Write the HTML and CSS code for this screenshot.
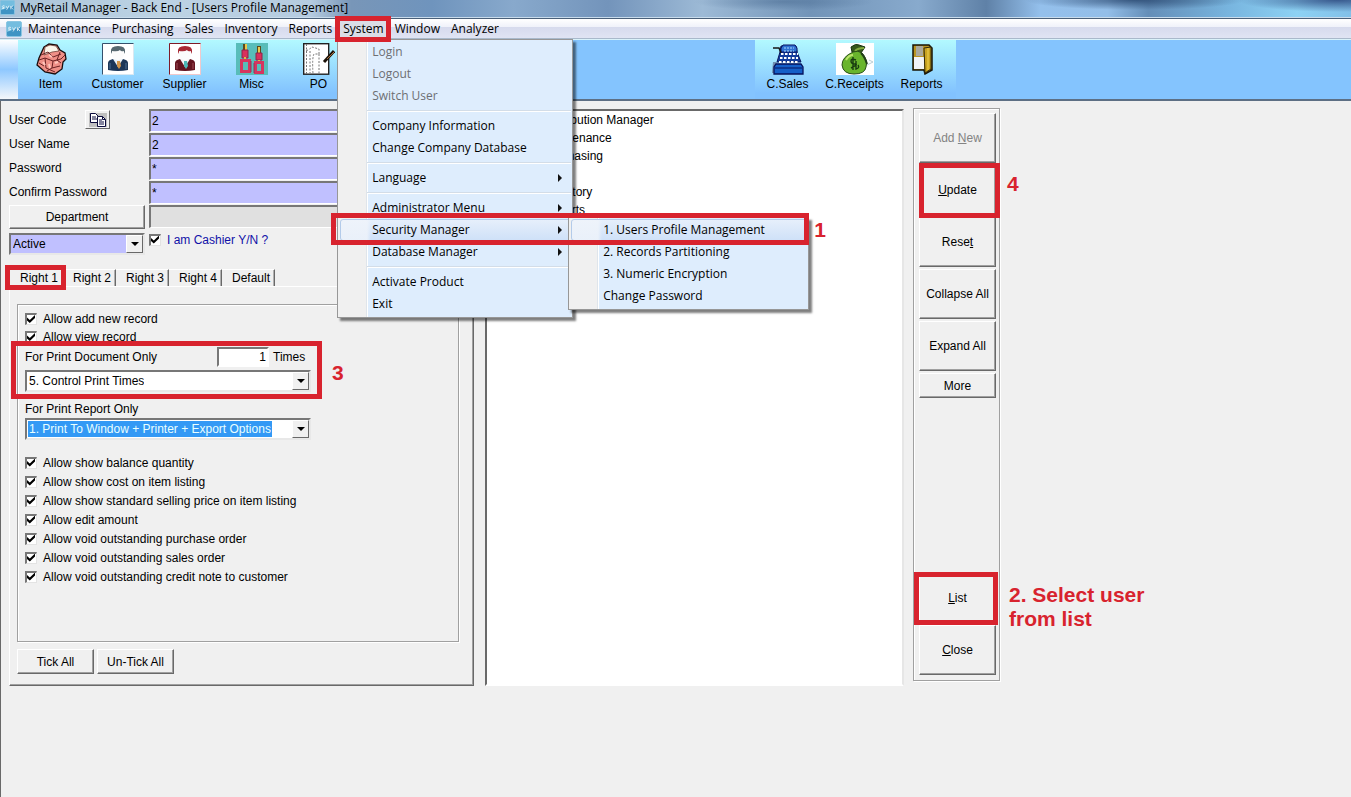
FILE: index.html
```html
<!DOCTYPE html>
<html lang="en">
<head>
<meta charset="utf-8">
<title>MyRetail Manager - Back End</title>
<link rel="stylesheet" href="styles.css">
</head>
<body>
<svg class="defs" aria-hidden="true">
  <symbol id="logo" viewBox="0 0 16 16">
    <rect x="0.5" y="0.5" width="15" height="15" rx="1.5" fill="#3f94c4" stroke="#8cc6e2"/>
    <path d="M1 1h14v5L1 11z" fill="#74bddf"/>
    <path d="M5 6.500q-2.500-1-2.500 0.500t2 1q1 1.500-2.500 1M6.500 6.500l1.500 2.500 1.500-3M7 10.500L8 9M11.500 10V6.500M11.500 8l2.500-2M12 8l2 2" fill="none" stroke="#fff" stroke-width="0.700"/>
  </symbol>
</svg>

<header class="titlebar">
  <svg class="titlebar__icon"><use href="#logo"/></svg>
  <span>MyRetail Manager - Back End - [Users Profile Management]</span>
</header>

<nav class="menubar">
  <svg class="menubar__icon"><use href="#logo"/></svg>
  <button class="menubar__item">Maintenance</button>
  <button class="menubar__item">Purchasing</button>
  <button class="menubar__item">Sales</button>
  <button class="menubar__item">Inventory</button>
  <button class="menubar__item">Reports</button>
  <div class="menubar__open">
    <button class="menubar__item">System</button>
    <span class="mark mark--system"></span>
    <ul class="menu">
      <li><button class="menu__item" disabled>Login</button></li>
      <li><button class="menu__item" disabled>Logout</button></li>
      <li><button class="menu__item" disabled>Switch User</button></li>
      <li class="menu__sep"></li>
      <li><button class="menu__item">Company Information</button></li>
      <li><button class="menu__item">Change Company Database</button></li>
      <li class="menu__sep"></li>
      <li><button class="menu__item menu__item--more">Language</button></li>
      <li class="menu__sep"></li>
      <li><button class="menu__item menu__item--more">Administrator Menu</button></li>
      <li class="menu__parent">
        <button class="menu__item menu__item--more menu__item--active">Security Manager</button>
        <ul class="menu menu--sub">
          <li><button class="menu__item menu__item--active">1. Users Profile Management</button></li>
          <li><button class="menu__item">2. Records Partitioning</button></li>
          <li><button class="menu__item">3. Numeric Encryption</button></li>
          <li><button class="menu__item">Change Password</button></li>
        </ul>
        <span class="mark mark--security"></span>
        <span class="note note--one">1</span>
      </li>
      <li><button class="menu__item menu__item--more">Database Manager</button></li>
      <li class="menu__sep"></li>
      <li><button class="menu__item">Activate Product</button></li>
      <li><button class="menu__item">Exit</button></li>
    </ul>
  </div>
  <button class="menubar__item">Window</button>
  <button class="menubar__item">Analyzer</button>
</nav>

<div class="toolbar">
  <span class="toolbar__grip"></span>
  <div class="toolbar__group">
    <button class="tool">
      <svg class="tool__icon" viewBox="0 0 32 32">
        <path d="M9 4l5-3 8 1 3 5 5 3 1 6-3 3-1 7-7 5-10-2-8-7 2-7z" fill="#ef8f86" stroke="#180d0d" stroke-width="1.300"/>
        <path d="M10 4l5-2 6 1 3 5-7 1-8 3z" fill="#fdf6ea" stroke="#5a3028" stroke-width="0.700"/>
        <path d="M4 17l6-2 8 3 8-2 4-4M6 12l7-3 5 5 8-3M10 15l1 10 9 4M18 18l-1 7 8-2M4 20l5 3M12 28l5-3M25 9l-3 8 4 3" fill="none" stroke="#6b2223"/>
        <path d="M8 19l2 3M14 12l3 2M20 20l3-1M14 21l1 4" stroke="#ffc5bb" stroke-width="2"/>
      </svg>
      <span>Item</span>
    </button>
    <button class="tool">
      <svg class="tool__icon" viewBox="0 0 32 32">
        <rect x="0.500" y="0.500" width="31" height="31" fill="#fff" stroke="#d9e8f2"/>
        <path d="M0.500 31.500V0.500h31" fill="none" stroke="#34506c"/>
        <path d="M6 27v-7q0-3 5-4h10q5 1 5 4v7q-10 2-20 0z" fill="#1b3658"/>
        <path d="M11 16l5 8 5-8z" fill="#e9f2f8"/><path d="M15 18h3l1 5-2 3-2-3z" fill="#d2954a"/>
        <path d="M9 9q-1-6 7-6t7 6l-1 2H10z" fill="#566870"/>
        <path d="M10 8q6 1 8-1 1 2 4 1v4q-1 5-6 5t-6-5z" fill="#fbfbfb"/>
        <path d="M8 20v6M24 20v6" stroke="#4f7094"/>
      </svg>
      <span>Customer</span>
    </button>
    <button class="tool">
      <svg class="tool__icon" viewBox="0 0 32 32">
        <rect x="0.500" y="0.500" width="31" height="31" fill="#fff" stroke="#f0c8cb"/>
        <path d="M0.500 31.500V0.500h31" fill="none" stroke="#7e1b28"/>
        <path d="M6 27v-7q0-3 5-4h10q5 1 5 4v7q-10 2-20 0z" fill="#641420"/>
        <path d="M11 16l5 8 5-8z" fill="#f4f6f8"/><path d="M15 18h3l1 5-2 3-2-3z" fill="#4cb8b8"/>
        <path d="M9 9q-1-6 7-6t7 6l-1 2H10z" fill="#a92a35"/>
        <path d="M10 8q6 1 8-1 1 2 4 1v4q-1 5-6 5t-6-5z" fill="#fbfbfb"/>
        <path d="M8 20v6M24 20v6" stroke="#a04b55"/>
      </svg>
      <span>Supplier</span>
    </button>
    <button class="tool">
      <svg class="tool__icon" viewBox="0 0 32 32">
        <rect width="32" height="32" fill="#58bdb9"/>
        <path d="M9 1v8M23 3v9" stroke="#5d4a1c" stroke-width="4"/><path d="M10 1v6M23 4v6" stroke="#ecc84b" stroke-width="2"/>
        <path d="M6 7h6v8H6zM20 10h6v7h-6z" fill="#d92f5c" stroke="#8d2548"/>
        <path d="M9 14v4M23 17v3" stroke="#e7b93d" stroke-width="2"/>
        <rect x="5.500" y="17.500" width="8" height="11" fill="#58bdb9" stroke="#d6355f" stroke-width="3"/>
        <rect x="19.500" y="19.500" width="7" height="10" fill="#58bdb9" stroke="#d6355f" stroke-width="3"/>
        <path d="M15 18v11M18 20v10" stroke="#8c385b"/>
      </svg>
      <span>Misc</span>
    </button>
    <button class="tool">
      <svg class="tool__icon" viewBox="0 0 32 32">
        <rect x="0.700" y="0.700" width="25" height="30.500" fill="#fff" stroke="#222" stroke-width="1.400"/>
        <path d="M3.500 1v30M3 8q4-2 6-4l7 2v5h-5q-2 3-1 20M16 11v20M7 8v22" fill="none" stroke="#777" stroke-dasharray="2 1.500"/>
        <path d="M31 8L21 19" stroke="#1c1208" stroke-width="3"/><path d="M31 9L24 16" stroke="#a9703d"/>
      </svg>
      <span>PO</span>
    </button>
  </div>
  <div class="toolbar__group toolbar__group--end">
    <button class="tool">
      <svg class="tool__icon" viewBox="0 0 32 32">
        <path d="M1 19h4l-2 11h-3z" fill="#6e8fb2"/>
        <path d="M9 3h15l1 6 4 10H5L8 9z" fill="#133c9c" stroke="#09145c"/>
        <path d="M9 5l2-3h12l2 3v4H9z" fill="#2f72d2" stroke="#071060"/>
        <path d="M1 5h6l2 5" fill="none" stroke="#161616" stroke-width="1.500"/>
        <path d="M4 21h25l2 3v7H2v-7z" fill="#155fc8" stroke="#07125c" stroke-width="1.300"/>
        <path d="M3 25h27" stroke="#071560"/>
        <path d="M9 11h17M8 15h18M7 19h20" stroke="#fff" stroke-width="2" stroke-dasharray="2.500 1.500"/>
        <path d="M12 5h10M12 8h10" stroke="#a8d6ff" stroke-dasharray="2 1"/>
      </svg>
      <span>C.Sales</span>
    </button>
    <button class="tool">
      <svg class="tool__icon tool__icon--wide" viewBox="0 0 38 32">
        <rect width="38" height="32" fill="#fff"/>
        <path d="M16 9L15 4q5-4 8-2l6 2-4 6z" fill="#35591d" stroke="#183411"/>
        <path d="M19 8q3-3 9-3" fill="none" stroke="#83ad40" stroke-width="2"/>
        <path d="M17 9q5-2 9 1 6 7 4 14-1 7-12 7T6 22q0-8 11-13z" fill="#69b52d" stroke="#284e16"/>
        <path d="M10 17q3-5 7-5" fill="none" stroke="#bbe36d" stroke-width="2"/>
        <path d="M20 17q-5-2-5 1t4 3-4 4M17 14v13M20 18v8q4-1 2-4" fill="none" stroke="#183b10" stroke-width="1.400"/>
        <path d="M31 22l6-3M33 17l4 2" fill="none" stroke="#bccfd6"/>
        <path d="M25 10q4 4 6 11" fill="none" stroke="#203f19" stroke-width="2"/>
      </svg>
      <span>C.Receipts</span>
    </button>
    <button class="tool">
      <svg class="tool__icon" viewBox="0 0 32 32">
        <path d="M7 2h16l3 3v22l-7 4-1-4H7z" fill="#b99521" stroke="#171407" stroke-width="1.500"/>
        <path d="M10 3h7v10h-7z" fill="#aaa89b"/><path d="M8 14h10v12H8z" fill="#f2f4f8"/>
        <path d="M18 5l7-1v22l-6 4z" fill="#c9a321" stroke="#30290d"/>
        <path d="M22 5v22" stroke="#f0d251"/>
      </svg>
      <span>Reports</span>
    </button>
  </div>
</div>

<main class="workspace">
  <section class="profile">
    <form class="fields">
      <div class="fields__label"><label for="code">User Code</label>
        <button type="button" class="copy" aria-label="Copy">
          <svg viewBox="0 0 18 14" width="18" height="14">
            <rect width="18" height="14" fill="#c0c0c0"/>
            <path d="M1.500 0.500h5l3 3v6h-8z" fill="#fff" stroke="#0b0b3c"/>
            <path d="M3 4h4M3 6h5" stroke="#0b0b3c"/>
            <path d="M8.500 3.500h5l3 3v7h-8z" fill="#fff" stroke="#0b0b3c"/>
            <path d="M13.500 3.500v3h3M10 7h3M10 9h5M10 11h5" fill="none" stroke="#0b0b3c"/>
          </svg>
        </button>
      </div>
      <input id="code" class="box" type="text" value="2">
      <div class="fields__label"><label for="name">User Name</label></div>
      <input id="name" class="box" type="text" value="2">
      <div class="fields__label"><label for="pw">Password</label></div>
      <input id="pw" class="box" type="text" value="*">
      <div class="fields__label"><label for="pw2">Confirm Password</label></div>
      <input id="pw2" class="box" type="text" value="*">
      <button type="button" class="btn btn--dept">Department</button>
      <input class="box box--off" type="text" aria-label="Department" readonly>
      <div class="combo combo--status">
        <select class="combo__select" aria-label="Status"><option>Active</option></select>
        <span class="combo__arrow"></span>
      </div>
      <label class="check check--cashier"><input type="checkbox" checked>I am Cashier Y/N ?</label>
    </form>

    <div class="tabs" role="tablist">
      <button class="tab tab--active" role="tab">Right 1<span class="mark mark--tab"></span></button>
      <button class="tab" role="tab">Right 2</button>
      <button class="tab" role="tab">Right 3</button>
      <button class="tab" role="tab">Right 4</button>
      <button class="tab" role="tab">Default</button>
    </div>
    <div class="page">
      <div class="rights">
        <label class="check"><input type="checkbox" checked>Allow add new record</label>
        <label class="check"><input type="checkbox" checked>Allow view record</label>
        <div class="print">
          <div class="print__row">
            <label for="doc">For Print Document Only</label>
            <input id="times" class="times" type="text" value="1">
            <label for="times">Times</label>
          </div>
          <div class="combo">
            <select id="doc" class="combo__select"><option>5. Control Print Times</option></select>
            <span class="combo__arrow"></span>
          </div>
          <span class="mark mark--print"></span>
          <span class="note note--three">3</span>
        </div>
        <div class="print print--report">
          <label for="report">For Print Report Only</label>
          <div class="combo">
            <select id="report" class="combo__select combo__select--chosen"><option>1. Print To Window + Printer + Export Options</option></select>
            <span class="combo__arrow"></span>
          </div>
        </div>
        <div class="allow">
          <label class="check"><input type="checkbox" checked>Allow show balance quantity</label>
          <label class="check"><input type="checkbox" checked>Allow show cost on item listing</label>
          <label class="check"><input type="checkbox" checked>Allow show standard selling price on item listing</label>
          <label class="check"><input type="checkbox" checked>Allow edit amount</label>
          <label class="check"><input type="checkbox" checked>Allow void outstanding purchase order</label>
          <label class="check"><input type="checkbox" checked>Allow void outstanding sales order</label>
          <label class="check"><input type="checkbox" checked>Allow void outstanding credit note to customer</label>
        </div>
      </div>
      <div class="page__actions">
        <button class="btn btn--tick">Tick All</button>
        <button class="btn btn--tick">Un-Tick All</button>
      </div>
    </div>
  </section>

  <ul class="tree">
    <li>Distribution Manager</li>
    <li>Maintenance</li>
    <li>Purchasing</li>
    <li>Sales</li>
    <li>Inventory</li>
    <li>Reports</li>
  </ul>

  <aside class="actions">
    <button class="btn btn--tall" disabled>Add <u>N</u>ew</button>
    <div class="marked">
      <button class="btn btn--tall"><u>U</u>pdate</button>
      <span class="mark mark--update"></span>
      <span class="note note--four">4</span>
    </div>
    <button class="btn btn--tall">Rese<u>t</u></button>
    <button class="btn btn--tall">Collapse All</button>
    <button class="btn btn--tall">Expand All</button>
    <button class="btn">More</button>
    <div class="marked marked--last">
      <button class="btn btn--tall"><u>L</u>ist</button>
      <span class="mark mark--list"></span>
      <span class="note note--two">2. Select user<br>from list</span>
    </div>
    <button class="btn btn--tall"><u>C</u>lose</button>
  </aside>
</main>
</body>
</html>
```
FILE: styles.css
```css
:root {
  --face: #f0f0f0;
  --dark: #696969;
  --mid: #a0a0a0;
  --field: #c0c0ff;
  --red: #d8232e;
  --ui: "Open Sans", "Noto Sans", sans-serif;
}

* { box-sizing: border-box; }

body {
  margin: 0;
  min-height: 100vh;
  display: flex;
  flex-direction: column;
  background: var(--face);
  color: #000;
  font: 12px/18px "Liberation Sans", Arial, sans-serif;
}

button, input, select { font: inherit; color: inherit; margin: 0; }
ul { list-style: none; margin: 0; padding: 0; }
.defs { display: none; }

/* Title bar */
.titlebar {
  height: 19px;
  display: flex;
  align-items: center;
  gap: 5px;
  padding-bottom: 3px;
  border-bottom: 1px solid #4a6079;
  box-shadow: inset 0 -1px #c9dcec;
  font: 12px/15px var(--ui);
  white-space: nowrap;
  background:
    radial-gradient(ellipse 110px 10px at 84% 0, rgba(39, 69, 109, 0.8) 0, transparent 100%),
    radial-gradient(ellipse 100px 12px at 99% 0, #38598d 0, transparent 100%),
    radial-gradient(ellipse 90px 9px at 58% 10%, rgba(67, 101, 140, 0.5) 0, transparent 100%),
    linear-gradient(90deg, #a9c3d9 0, #bdd3e4 12%, #b5cbe0 23%, #7896b8 26%, #6f94bd 32%, #88a9cc 38%, #7394bb 45%, #9dbad6 52%, #7294b8 60%, #88aacd 68%, #5f81a7 73%, #94c0ec 77%, #93bee8 82%, #648eb8 85%, #78b5df 91%, #8dd2f4 96%, #82c0e8 100%);
}
.titlebar__icon { width: 15px; height: 15px; flex: none; }

/* Menu bar and drop-down menus */
.menubar {
  position: relative;
  z-index: 5;
  height: 20px;
  display: flex;
  align-items: center;
  padding-left: 6px;
  border-bottom: 1px solid #a9b9cb;
  font: 12px/18px var(--ui);
  background: linear-gradient(#fff 0, #f0f2fa 40%, #d6daed 42%, #e0e4f3 100%);
}
.menubar__icon { width: 16px; height: 16px; flex: none; }
.menubar__item { border: 0; background: none; padding: 0 5px 0 6px; }
.menubar__open { position: relative; }
.menubar__open > .menubar__item { background: #dadde6; }

.menu {
  position: absolute;
  top: 19px;
  left: 0;
  width: 236px;
  padding: 1px 1px 2px 2px;
  border: 1px solid #979797;
  background: linear-gradient(90deg, #f0f0f0 0 28px, #dfe5eb 28px 29px, #fff 29px 30px, #deedfd 30px);
  box-shadow: 3px 3px 2px rgba(0, 0, 0, 0.5);
}
.menu__item {
  display: block;
  width: 100%;
  height: 22px;
  padding: 0 0 0 31px;
  border: 1px solid transparent;
  border-radius: 3px;
  background: none;
  text-align: left;
  white-space: nowrap;
}
.menu__item:disabled { color: #6d6f73; }
.menu__item--active {
  border-color: #b3cbea;
  background: linear-gradient(90deg, rgba(240, 244, 250, 0.8) 26px, transparent 30px), linear-gradient(#e6effb, #cfe1f8);
}
.menu__item--more { position: relative; }
.menu__item--more::after {
  content: "";
  position: absolute;
  top: 6px;
  right: 8px;
  border: 4px solid transparent;
  border-left-color: #111;
  border-right-width: 0;
}
.menu__sep {
  height: 8px;
  margin-left: 27px;
  background: linear-gradient(transparent 3px, #d3dde8 3px 4px, #fff 4px 5px, transparent 5px);
}
.menu__parent { position: relative; }
.menu--sub { top: -2px; left: 228px; width: 241px; }

/* Red annotations */
.mark {
  position: absolute;
  z-index: 3;
  border: 5px solid var(--red);
  pointer-events: none;
}
.mark--system { inset: -4px -2px; }
.mark--security { inset: -6px -238px -4px -9px; }
.mark--tab { inset: -5px -4px -4px -4px; }
.mark--print { inset: -6px -11px -7px -14px; }
.mark--update { inset: -2px -4px -3px 0; }
.mark--list { inset: -1px -2px -2px -5px; }
.note {
  position: absolute;
  z-index: 3;
  color: var(--red);
  font: bold 21px/24px "Liberation Sans", Arial, sans-serif;
  white-space: nowrap;
}
.note--one { left: 474px; top: -1px; }
.note--two { left: 90px; top: 10px; }
.note--three { left: 307px; top: 14px; }
.note--four { left: 88px; top: 7px; }

/* Toolbar */
.toolbar {
  display: flex;
  height: 62px;
  border-top: 1px solid #d9f2fa;
  border-bottom: 2px solid #5d6f84;
  background: #84c4fe;
}
.toolbar__grip { width: 18px; background: linear-gradient(#fdfeff, #8ec8ff 50%, #f4f7fb); }
.toolbar__group { display: flex; background: linear-gradient(#b2f9ff, #82c2fe 90%); }
.toolbar__group--end { margin-left: 402px; }
.tool {
  width: 67px;
  padding: 3px 2px 0 0;
  border: 0;
  background: none;
  display: flex;
  flex-direction: column;
  align-items: center;
  line-height: 19px;
}
.tool__icon { width: 32px; height: 32px; flex: none; }
.tool__icon--wide { width: 38px; }

/* Work area */
.workspace {
  flex: 1;
  display: grid;
  grid-template-columns: 465fr 421fr 87px 342fr;
  align-content: start;
  column-gap: 9px;
  padding: 8px 0 0 8px;
  border-left: 1px solid var(--dark);
}

.fields {
  display: grid;
  grid-template-columns: 136px 1fr;
  grid-auto-rows: 24px;
  column-gap: 4px;
}
.fields__label { display: flex; align-items: center; gap: 19px; padding-bottom: 3px; }
.copy {
  display: flex;
  align-items: center;
  justify-content: center;
  width: 25px;
  height: 19px;
  padding: 0;
  border: 1px solid;
  border-color: #fff var(--dark) var(--dark) #fff;
  background: var(--face);
}
.box {
  width: 100%;
  height: 23px;
  padding: 0 1px 1px;
  border: 2px solid;
  border-color: #777 #fff #fff #777;
  border-bottom-width: 1px;
  background: var(--field);
}
.box--off { background: #e0e0e0; }

.btn {
  height: 25px;
  padding: 0;
  border: 1px solid;
  border-color: #fff var(--dark) var(--dark) #fff;
  box-shadow: inset -1px -1px var(--mid);
  background: var(--face);
}
.btn:disabled { color: #838383; }
.btn--dept { height: 24px; }

.combo {
  display: flex;
  align-items: center;
  height: 22px;
  padding-left: 1px;
  border: 2px solid;
  border-color: #777 #e8e8e8 #e8e8e8 #777;
  background: #fff;
}
.combo--status { background: var(--field); margin-top: 4px; }
.combo__select {
  appearance: none;
  field-sizing: content;
  height: 16px;
  line-height: 16px;
  padding: 0 1px;
  border: 0;
  background: none;
}
.combo__select--chosen { background: #3399f5; color: #e8ffff; }
.combo__arrow {
  width: 17px;
  align-self: stretch;
  margin-left: auto;
  display: grid;
  place-items: center;
  border: 1px solid;
  border-color: #fff var(--dark) var(--dark) #fff;
  background: var(--face);
  pointer-events: none;
}
.combo__arrow::after {
  content: "";
  border: 4px solid transparent;
  border-top-color: #000;
  border-bottom-width: 0;
}

.check { display: flex; align-items: center; gap: 6px; height: 19px; }
.check input {
  appearance: none;
  width: 12px;
  height: 12px;
  border: 2px solid;
  border-color: #777 #e3e3e3 #e3e3e3 #777;
  border-right-width: 1px;
  border-bottom-width: 1px;
  background: #fff;
}
.check input:checked::after {
  content: "";
  display: block;
  width: 8px;
  height: 8px;
  background: #000;
  clip-path: polygon(0 30%, 35% 62%, 100% 0, 100% 38%, 35% 100%, 0 68%);
}
.check--cashier { color: #1111a8; margin-top: 1px; }

/* Tabs */
.tabs { display: flex; padding-top: 16px; }
.tab {
  position: relative;
  width: 53px;
  height: 17px;
  padding: 0 0 0 6px;
  border: 0;
  border-right: 1px solid var(--dark);
  border-top: 1px solid #fff;
  box-shadow: inset -1px 0 #b0b0b0;
  background: var(--face);
  line-height: 16px;
}
.tab--active { width: 54px; padding-left: 7px; }

.page {
  padding: 17px 14px 11px 7px;
  border: 1px solid;
  border-color: #fff var(--dark) var(--dark) #fff;
  box-shadow: inset -1px -1px var(--mid);
}
.rights {
  padding: 5px 7px 55px;
  border: 1px solid var(--mid);
  box-shadow: 1px 1px #fff, inset 1px 1px #fff;
}
.rights > .check { height: 18px; }
.print { position: relative; width: 286px; margin-top: 1px; }
.print__row { display: flex; align-items: center; height: 23px; padding-bottom: 3px; }
.times {
  width: 52px;
  height: 20px;
  margin: 0 4px 0 auto;
  padding: 0 1px;
  border: 2px solid;
  border-color: #777 #fff #fff #777;
  background: #fff;
  text-align: right;
}
.print__row > label:last-child { width: 38px; }
.print--report { margin-top: 8px; }
.print--report > label { display: block; }
.allow { padding-top: 13px; }
.page__actions { display: flex; gap: 3px; padding-top: 7px; }
.btn--tick { width: 77px; }

.tree {
  margin-left: 2px;
  padding: 0 0 0 56px;
  border: 2px solid;
  border-color: var(--dark) #fff #fff var(--dark);
  border-right-color: #e6e6e6;
  background: #fff;
  white-space: nowrap;
}

.actions {
  display: flex;
  flex-direction: column;
  gap: 2px;
  margin: -1px 0 5px;
  padding: 4px 3px 5px 5px;
  border: 1px solid var(--mid);
  box-shadow: 1px 1px #fff, inset 1px 1px #fff;
}
.btn--tall { height: 50px; width: 100%; }
.marked { position: relative; }
.marked--last { margin-top: auto; }
```
